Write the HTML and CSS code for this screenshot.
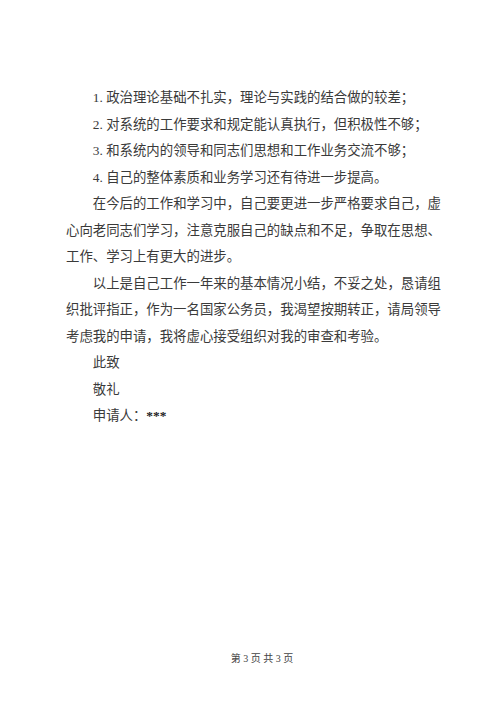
FILE: index.html
```html
<!DOCTYPE html>
<html lang="zh-CN">
<head>
  <meta charset="UTF-8">
  <title>转正申请</title>
  <link rel="stylesheet" href="styles.css">
</head>
<body>
  <div class="page">
    <div class="text">
      <div class="line indent">1. 政治理论基础不扎实，理论与实践的结合做的较差；</div>
      <div class="line indent">2. 对系统的工作要求和规定能认真执行，但积极性不够；</div>
      <div class="line indent">3. 和系统内的领导和同志们思想和工作业务交流不够；</div>
      <div class="line indent">4. 自己的整体素质和业务学习还有待进一步提高。</div>

      <!-- 今后打算 -->
      <div class="line indent full">在今后的工作和学习中，自己要更进一步严格要求自己，虚</div>
      <div class="line full">心向老同志们学习，注意克服自己的缺点和不足，争取在思想、</div>
      <div class="line">工作、学习上有更大的进步。</div>

      <div class="line indent full">以上是自己工作一年来的基本情况小结，不妥之处，恳请组</div>
      <div class="line full">织批评指正，作为一名国家公务员，我渴望按期转正，请局领导</div>
      <div class="line">考虑我的申请，我将虚心接受组织对我的审查和考验。</div>

      <div class="line indent">此致</div>
      <div class="line indent">敬礼</div>
      <div class="line indent">申请人：<b>***</b></div>
    </div>

    <div class="footer">第 3 页 共 3 页</div>
  </div>
</body>
</html>
```

FILE: styles.css
```css
body {
  margin: 0;
  background: #fff;
  font-family: "Liberation Serif", "Noto Sans CJK SC", serif;
  color: #3a3a3a;
}

.page {
  width: 500px;
  height: 707px;
  padding-top: 85px;
  box-sizing: border-box;
}

.text {
  margin-left: 66px;
  width: 374px;
  font-size: 13.4px;
  line-height: 26.5px;
}

.line {
  white-space: nowrap;
}

.indent {
  text-indent: 2em;
}

.full {
  text-align: justify;
  text-align-last: justify;
}

.text b {
  font-weight: bold;
  color: #222;
}

.footer {
  margin-top: 222px;
  padding-left: 24px;
  text-align: center;
  font-size: 10px;
  line-height: 14px;
  color: #444;
}
```
